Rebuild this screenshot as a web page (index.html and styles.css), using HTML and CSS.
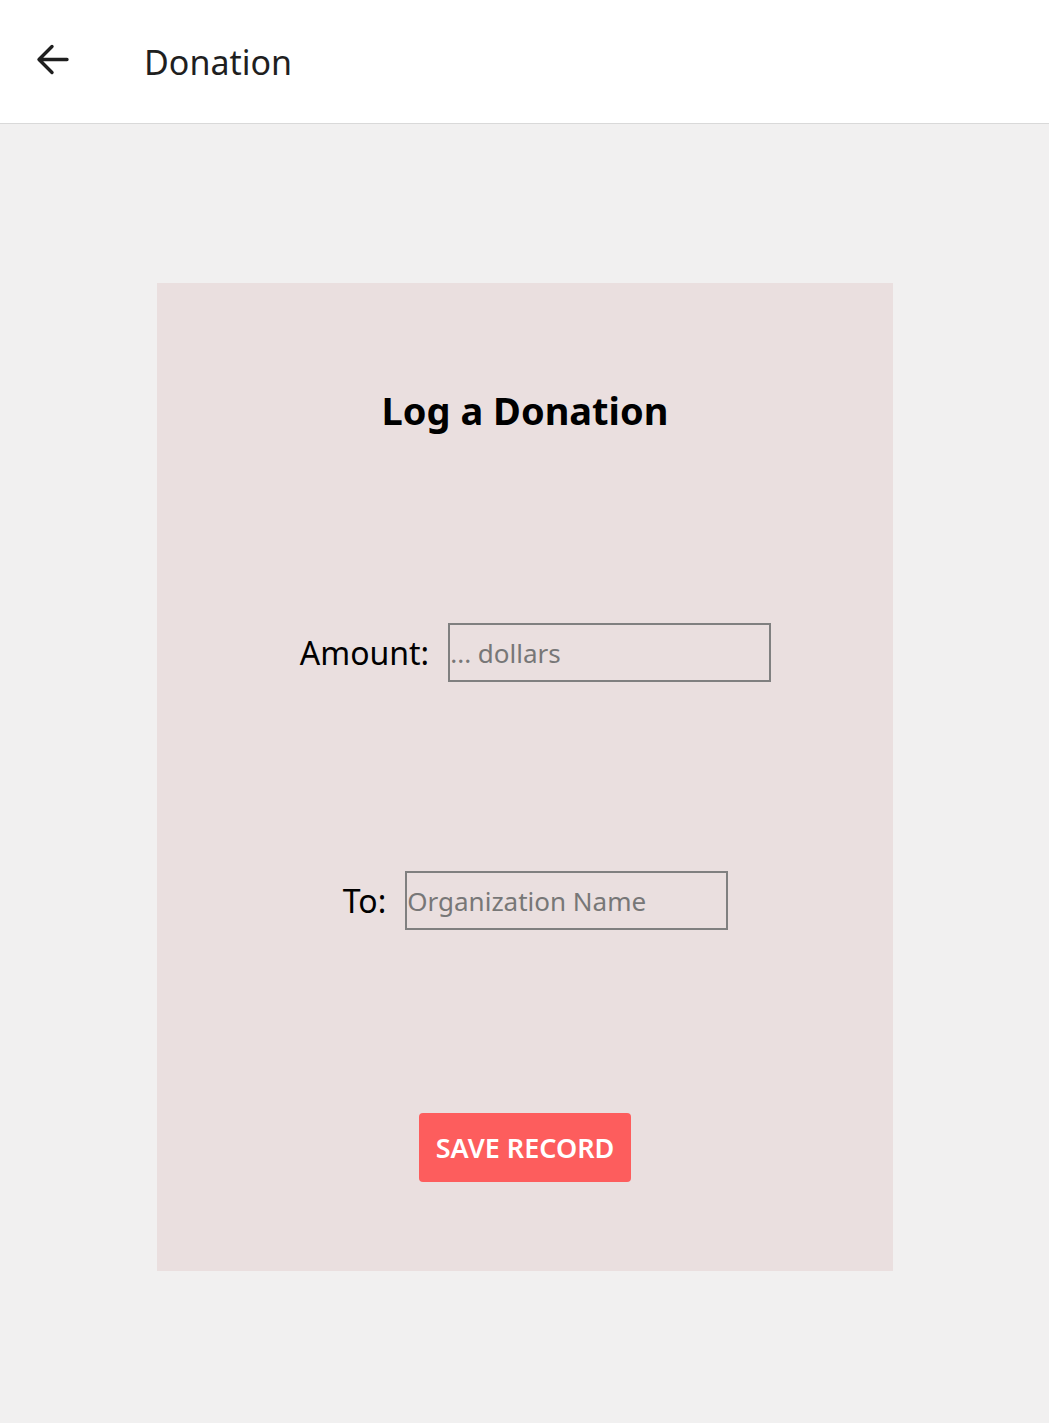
FILE: index.html
```html
<!DOCTYPE html>
<html>
<head>
<meta charset="utf-8">
<link rel="stylesheet" href="styles.css">
</head>
<body>
<header class="topbar">
  <button class="back" aria-label="Back">
    <svg width="40" height="40" viewBox="0 0 40 40"><path d="M36 19.5H9 M21 6.5 L8 19.5 L21 32.5" fill="none" stroke="#1f1f1f" stroke-width="3.4" stroke-linecap="round" stroke-linejoin="round"/></svg>
  </button>
  <h1 class="page-title">Donation</h1>
</header>
<main class="content">
  <section class="card">
    <h2 class="card-title">Log a Donation</h2>
    <div class="row row-amount">
      <label class="label" for="amt">Amount:</label>
      <input class="field" id="amt" type="text" placeholder="... dollars">
    </div>
    <div class="row row-to">
      <label class="label" for="org">To:</label>
      <input class="field" id="org" type="text" placeholder="Organization Name">
    </div>
    <button class="save">SAVE RECORD</button>
  </section>
</main>
</body>
</html>
```

FILE: styles.css
```css
html, body {
  margin: 0;
  padding: 0;
}
body {
  background: #f1f0f0;
  font-family: "Noto Sans", "Open Sans", sans-serif;
  min-height: 1423px;
}
.topbar {
  height: 123px;
  background: #ffffff;
  border-bottom: 1px solid #d9d9d9;
  display: flex;
  align-items: center;
  box-sizing: content-box;
}
.back {
  background: none;
  border: none;
  padding: 0;
  margin-left: 31px;
  margin-top: -4px;
  width: 40px;
  height: 40px;
  display: flex;
  align-items: center;
  justify-content: center;
}
.page-title {
  margin: 0 0 0 73px;
  font-size: 34px;
  font-weight: 400;
  color: #1f1f1f;
  line-height: 1;
}
.content {
  padding-top: 159px;
}
.card {
  width: 736px;
  height: 988px;
  margin: 0 auto 0 157px;
  background: #eadfdf;
  box-sizing: border-box;
  padding-top: 103px;
  display: flex;
  flex-direction: column;
  align-items: center;
}
.card-title {
  margin: 0;
  height: 48px;
  line-height: 48px;
  font-size: 38px;
  font-weight: 700;
  color: #000;
}
.row {
  display: flex;
  align-items: center;
  gap: 19px;
  padding-left: 21px;
  height: 59px;
}
.row-amount { margin-top: 189px; }
.row-to { margin-top: 189px; }
.label {
  font-size: 32px;
  color: #000;
}
.field {
  width: 323px;
  height: 59px;
  box-sizing: border-box;
  border: 2px solid #808080;
  background: transparent;
  padding: 0;
  font-family: inherit;
  font-size: 26px;
  color: #000;
  outline: none;
}
.field::placeholder {
  color: #777;
}
.save {
  margin-top: 183px;
  width: 212px;
  height: 69px;
  background: #fd5d5d;
  border: none;
  border-radius: 4px;
  color: #fff;
  font-family: inherit;
  font-size: 27px;
  font-weight: 600;
  padding: 0;
}
```
